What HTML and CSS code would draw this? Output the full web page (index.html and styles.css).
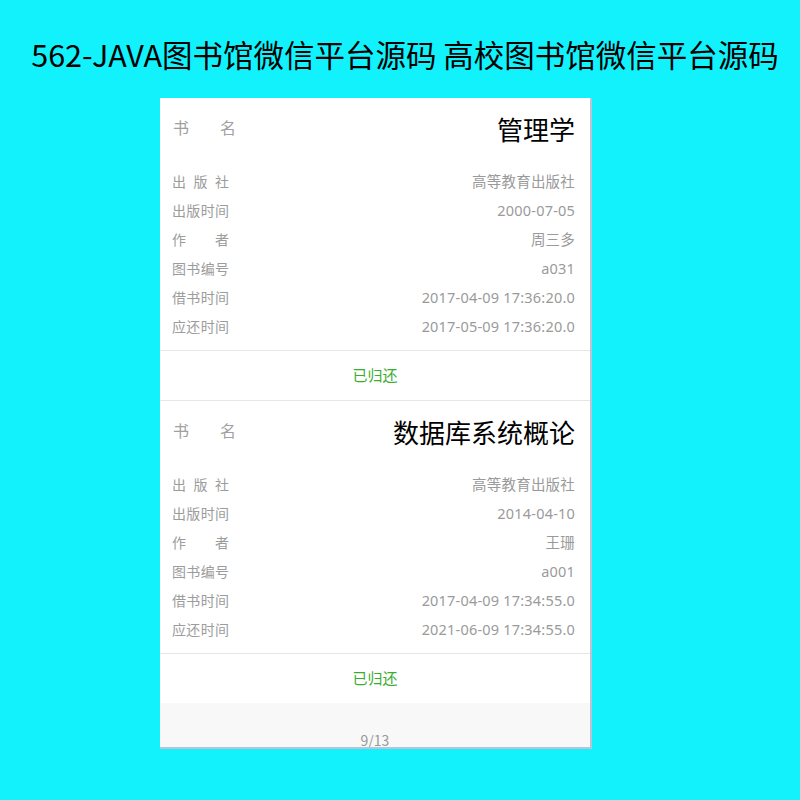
FILE: index.html
```html
<!DOCTYPE html>
<html lang="zh-CN">
<head>
<meta charset="utf-8">
<title>562-JAVA图书馆微信平台源码</title>
<link rel="stylesheet" href="styles.css">
</head>
<body>
<header class="banner">562-JAVA图书馆微信平台源码 高校图书馆微信平台源码</header>
<main class="phone">
  <section class="card">
    <div class="head">
      <span class="head-label">书名</span>
      <span class="head-title">管理学</span>
    </div>
    <ul class="info">
      <li><span class="lbl">出版社</span><span class="val">高等教育出版社</span></li>
      <li><span class="lbl">出版时间</span><span class="val">2000-07-05</span></li>
      <li><span class="lbl">作者</span><span class="val">周三多</span></li>
      <li><span class="lbl">图书编号</span><span class="val">a031</span></li>
      <li><span class="lbl">借书时间</span><span class="val">2017-04-09 17:36:20.0</span></li>
      <li><span class="lbl">应还时间</span><span class="val">2017-05-09 17:36:20.0</span></li>
    </ul>
    <div class="status">已归还</div>
  </section>
  <section class="card">
    <div class="head">
      <span class="head-label">书名</span>
      <span class="head-title">数据库系统概论</span>
    </div>
    <ul class="info">
      <li><span class="lbl">出版社</span><span class="val">高等教育出版社</span></li>
      <li><span class="lbl">出版时间</span><span class="val">2014-04-10</span></li>
      <li><span class="lbl">作者</span><span class="val">王珊</span></li>
      <li><span class="lbl">图书编号</span><span class="val">a001</span></li>
      <li><span class="lbl">借书时间</span><span class="val">2017-04-09 17:34:55.0</span></li>
      <li><span class="lbl">应还时间</span><span class="val">2021-06-09 17:34:55.0</span></li>
    </ul>
    <div class="status">已归还</div>
  </section>
  <footer class="pager">9/13</footer>
</main>
</body>
</html>
```

FILE: styles.css
```css
* { box-sizing: border-box; }
html, body { margin: 0; padding: 0; }
body {
  background: #12f2fd;
  width: 800px;
  height: 800px;
  overflow: hidden;
  font-family: "Noto Sans CJK SC", "Noto Sans", sans-serif;
}
.banner {
  height: 98px;
  padding-top: 32px;
  padding-left: 10px;
  line-height: 44px;
  font-size: 30.5px;
  color: #000;
  text-align: center;
  white-space: nowrap;
}
.phone {
  margin-left: 160px;
  width: 432px;
  height: 651px;
  background: #fff;
  border-right: 2px solid #b9c2d6;
  border-bottom: 2px solid #b9c2d6;
  overflow: hidden;
  display: flex;
  flex-direction: column;
}
.card {
  border-bottom: 1px solid #e6e6e6;
}
.card:last-of-type { border-bottom: none; }
.head {
  height: 60px;
  padding: 0 15px 0 13px;
  display: flex;
  align-items: center;
  justify-content: space-between;
}
.head-label {
  width: 63px;
  font-size: 16px;
  color: #a0a0a0;
  text-align: justify;
  text-align-last: justify;
  margin-top: -2px;
}
.head-title {
  font-size: 26px;
  color: #000;
  line-height: 30px;
  margin-top: 2px;
}
.info {
  list-style: none;
  margin: 0;
  padding: 8px 15px 10px 12px;
}
.info li {
  height: 29px;
  display: flex;
  align-items: center;
  justify-content: space-between;
  font-size: 14px;
  color: #9c9c9c;
}
.lbl {
  width: 57px;
  text-align: justify;
  text-align-last: justify;
}
.val {
  color: #9a9a9a;
  font-size: 14.5px;
  letter-spacing: 0.2px;
  font-family: "Noto Sans", "Noto Sans CJK SC", sans-serif;
}
.status {
  border-top: 1px solid #e6e6e6;
  height: 50px;
  line-height: 48px;
  text-align: center;
  font-size: 15px;
  color: #3aad30;
}
.pager {
  flex: 1;
  background: #f8f8f8;
  text-align: center;
  font-size: 14px;
  color: #999;
  padding-top: 27px;
  line-height: 20px;
}
```
